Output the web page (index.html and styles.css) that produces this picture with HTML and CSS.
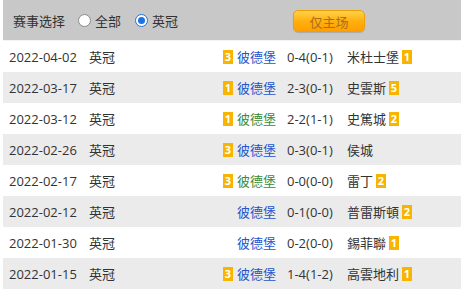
FILE: index.html
```html
<!DOCTYPE html>
<html>
<head>
<meta charset="utf-8">
<link rel="stylesheet" href="styles.css">
</head>
<body>
<div class="wrap">
  <div class="head">
    <span class="label">赛事选择</span>
    <label class="radio"><span class="dot"></span>全部</label>
    <label class="radio"><span class="dot on"></span>英冠</label>
    <span class="btn">仅主场</span>
  </div>
  <div class="rows">
    <div class="row"><span class="date">2022-04-02</span><span class="lg">英冠</span><span class="home"><i class="b">3</i><span class="t blue">彼德堡</span></span><span class="sc">0-4(0-1)</span><span class="away">米杜士堡<i class="b">1</i></span></div>
    <div class="row alt"><span class="date">2022-03-17</span><span class="lg">英冠</span><span class="home"><i class="b">1</i><span class="t blue">彼德堡</span></span><span class="sc">2-3(0-1)</span><span class="away">史雲斯<i class="b">5</i></span></div>
    <div class="row"><span class="date">2022-03-12</span><span class="lg">英冠</span><span class="home"><i class="b">1</i><span class="t green">彼德堡</span></span><span class="sc">2-2(1-1)</span><span class="away">史篤城<i class="b">2</i></span></div>
    <div class="row alt"><span class="date">2022-02-26</span><span class="lg">英冠</span><span class="home"><i class="b">3</i><span class="t blue">彼德堡</span></span><span class="sc">0-3(0-1)</span><span class="away">侯城</span></div>
    <div class="row"><span class="date">2022-02-17</span><span class="lg">英冠</span><span class="home"><i class="b">3</i><span class="t green">彼德堡</span></span><span class="sc">0-0(0-0)</span><span class="away">雷丁<i class="b">2</i></span></div>
    <div class="row alt"><span class="date">2022-02-12</span><span class="lg">英冠</span><span class="home"><span class="t blue">彼德堡</span></span><span class="sc">0-1(0-0)</span><span class="away">普雷斯頓<i class="b">2</i></span></div>
    <div class="row"><span class="date">2022-01-30</span><span class="lg">英冠</span><span class="home"><span class="t blue">彼德堡</span></span><span class="sc">0-2(0-0)</span><span class="away">錫菲聯<i class="b">1</i></span></div>
    <div class="row alt"><span class="date">2022-01-15</span><span class="lg">英冠</span><span class="home"><i class="b">3</i><span class="t blue">彼德堡</span></span><span class="sc">1-4(1-2)</span><span class="away">高雲地利<i class="b">1</i></span></div>
  </div>
</div>
</body>
</html>
```
FILE: styles.css
```css
html, body { margin: 0; padding: 0; background: #fff; }
body {
  padding-left: 3px;
  font-family: "Open Sans", "Noto Sans CJK SC", sans-serif;
  font-size: 13px;
  color: #333;
}
.wrap { width: 458px; }
.head {
  height: 40px;
  background: #c8c8c8;
  display: flex;
  align-items: center;
  border-bottom: 1px solid #f4f4f4;
}
.label { margin-left: 10px; margin-right: 13px; }
.radio { display: flex; align-items: center; margin-right: 14px; }
.dot {
  width: 13px; height: 13px; border-radius: 50%;
  background: #fff; border: 1px solid #8a8a8a;
  margin-right: 4px; box-sizing: border-box;
  position: relative;
}
.dot.on { border: 1px solid #1a73e8; }
.dot.on::after {
  content: ""; position: absolute; left: 2px; top: 2px;
  width: 7px; height: 7px; border-radius: 50%; background: #1a73e8;
}
.btn {
  margin-left: 101px;
  margin-top: 2px;
  width: 72px; height: 22px;
  border-radius: 5px;
  background: linear-gradient(#ffd24a, #ffb010 50%, #ff9f00);
  border: 1px solid #f0a000;
  box-sizing: border-box;
  color: #a8701a;
  display: flex; align-items: center; justify-content: center;
  box-shadow: 0 1px 1px rgba(0,0,0,0.15);
}
.row {
  height: 31px;
  display: flex;
  align-items: center;
  white-space: nowrap;
}
.row.alt { background: #ebebeb; }
.date { width: 80px; padding-left: 6px; }
.lg { width: 40px; }
.home { width: 147px; display: flex; justify-content: flex-end; align-items: center; }
.sc { width: 60px; padding-left: 11px; }
.away { display: flex; align-items: center; }
.b {
  font-style: normal;
  display: inline-block;
  width: 10px; height: 14px;
  background: #f7b400;
  color: #fff;
  font-size: 11px;
  line-height: 14px;
  text-align: center;
  margin: 0 4px 0 3px;
  font-weight: bold;
}
.home .b { margin: 0 4px 0 0; }
.t.blue { color: #2255cc; }
.t.green { color: #3a8a3a; }
```
